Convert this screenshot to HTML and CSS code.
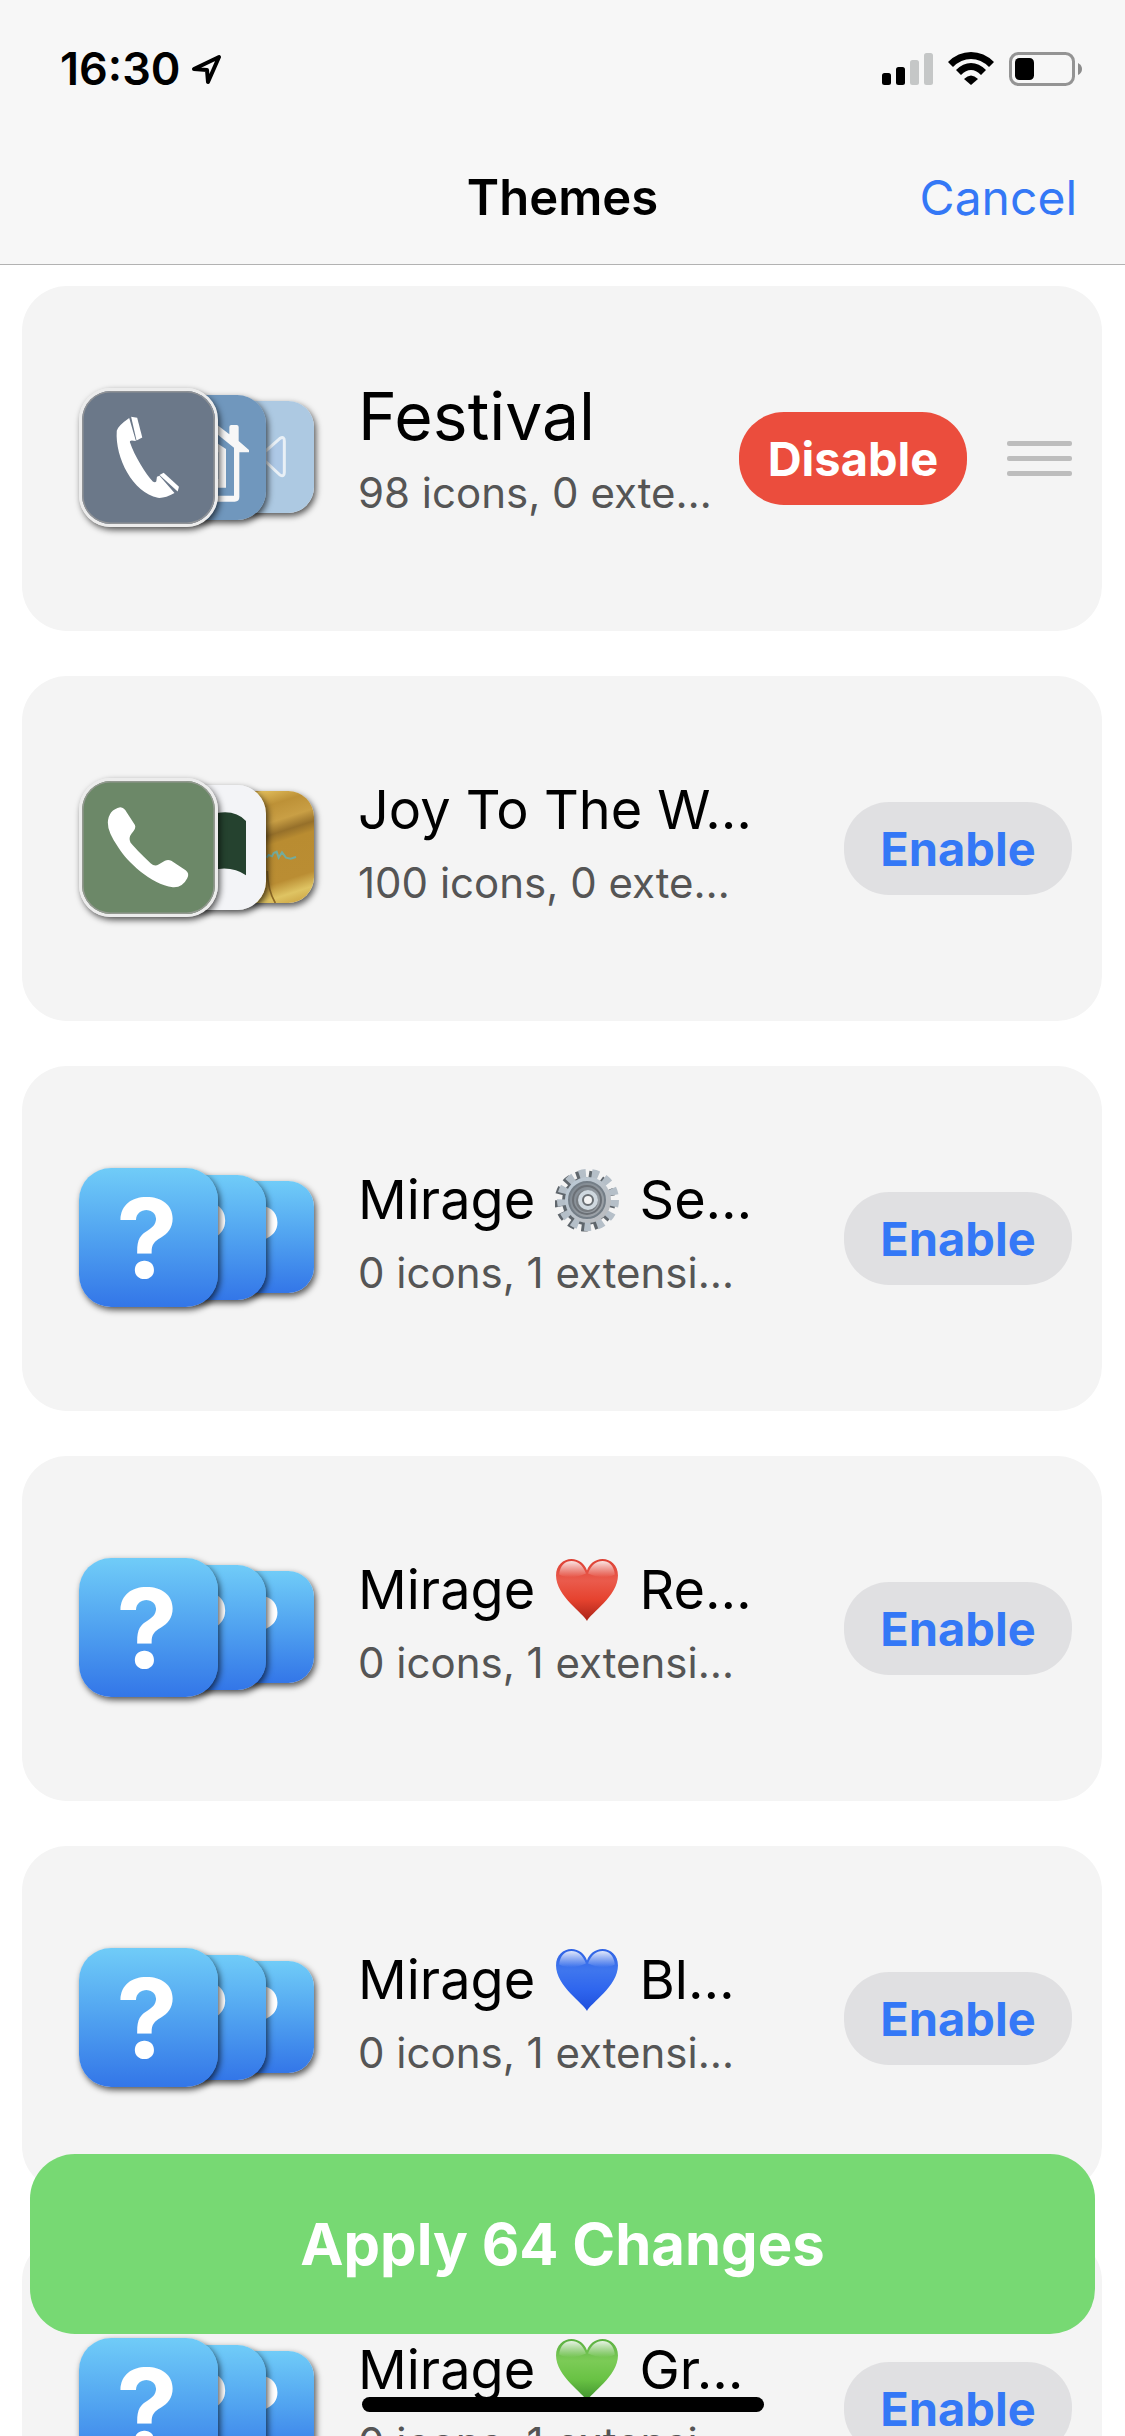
FILE: index.html
```html
<!DOCTYPE html>
<html lang="en">
<head>
<meta charset="utf-8">
<meta name="viewport" content="width=device-width, initial-scale=1">
<title>Themes</title>
<link rel="stylesheet" href="styles.css">
</head>
<body>
<svg class="defs" aria-hidden="true">
  <defs>
    <linearGradient id="sky" x1="0" y1="0" x2="0" y2="1">
      <stop offset="0" stop-color="#70ccf8"/>
      <stop offset="0.5" stop-color="#50a2f0"/>
      <stop offset="1" stop-color="#3376e8"/>
    </linearGradient>
    <linearGradient id="gold" x1="0" y1="0" x2="0" y2="1">
      <stop offset="0" stop-color="#e3bf5c"/>
      <stop offset="0.14" stop-color="#bd9137"/>
      <stop offset="0.28" stop-color="#c99f45"/>
      <stop offset="0.38" stop-color="#96702a"/>
      <stop offset="0.46" stop-color="#b98c31"/>
      <stop offset="0.78" stop-color="#ba8d33"/>
      <stop offset="0.9" stop-color="#dfc463"/>
      <stop offset="1" stop-color="#cda646"/>
    </linearGradient>
    <linearGradient id="steel" x1="0" y1="0" x2="1" y2="1">
      <stop offset="0" stop-color="#bccbd8"/>
      <stop offset="1" stop-color="#b9babc"/>
    </linearGradient>
    <linearGradient id="dish" x1="0" y1="0" x2="1" y2="1">
      <stop offset="0" stop-color="#7b848d"/>
      <stop offset="1" stop-color="#a3a8ad"/>
    </linearGradient>
    <linearGradient id="red" x1="0" y1="0" x2="0" y2="1">
      <stop offset="0" stop-color="#dc4034"/>
      <stop offset="0.35" stop-color="#ea5b4c"/>
      <stop offset="0.65" stop-color="#e6432f"/>
      <stop offset="1" stop-color="#a92318"/>
    </linearGradient>
    <linearGradient id="blue" x1="0" y1="0" x2="0" y2="1">
      <stop offset="0" stop-color="#2f62e4"/>
      <stop offset="0.35" stop-color="#3f76ee"/>
      <stop offset="0.65" stop-color="#2f66ee"/>
      <stop offset="1" stop-color="#1f4fdc"/>
    </linearGradient>
    <linearGradient id="green" x1="0" y1="0" x2="0" y2="1">
      <stop offset="0" stop-color="#59ae3f"/>
      <stop offset="0.35" stop-color="#7ccb57"/>
      <stop offset="0.65" stop-color="#69c244"/>
      <stop offset="1" stop-color="#3d8f2c"/>
    </linearGradient>
    <linearGradient id="gloss" x1="0" y1="0" x2="0" y2="1">
      <stop offset="0" stop-color="#fff" stop-opacity="0.85"/>
      <stop offset="1" stop-color="#fff" stop-opacity="0"/>
    </linearGradient>
    <symbol id="unknown" viewBox="0 0 139 139">
      <rect width="139" height="139" fill="url(#sky)"/>
      <text class="mark" x="68" y="110" text-anchor="middle">?</text>
    </symbol>
    <symbol id="heart" viewBox="0 0 62 62">
      <path d="M31 61 C28 54 1 37 1 17 C1 7 8 1 16 1 C23 1 29 6 31 12 C33 6 39 1 46 1 C54 1 61 7 61 17 C61 37 34 54 31 61Z"/>
      <path d="M4 16 C5 7 10 3 16 3 C22 3 27 7 30 15 C21 19 12 20 4 16Z M32 15 C35 7 40 3 46 3 C52 3 57 7 58 16 C50 20 41 19 32 15Z" fill="url(#gloss)"/>
    </symbol>
  </defs>
</svg>

<div class="app">
  <header class="header">
    <div class="status">
      <div class="status-left">
        <span class="time">16:30</span>
        <svg class="location" width="30" height="31" viewBox="0 0 30 31" aria-hidden="true"><path d="M2 15 L27 3 L16 28 L15 16Z" fill="none" stroke="#000" stroke-width="4" stroke-linejoin="round"/></svg>
      </div>
      <div class="status-right">
        <svg width="51" height="34" viewBox="0 0 51 34" aria-hidden="true">
          <rect x="0" y="21" width="9" height="12" rx="2.500"/>
          <rect x="14" y="15" width="9" height="18" rx="2.500"/>
          <rect x="28" y="8" width="9" height="25" rx="2.500" fill="#c5c7c7"/>
          <rect x="42" y="1" width="9" height="32" rx="2.500" fill="#c5c7c7"/>
        </svg>
        <svg width="46" height="34" viewBox="0 0 46 34" aria-hidden="true">
          <path d="M0 10 Q10 0 23 0 Q36 0 46 10 L41 15 Q33 7 23 7 Q13 7 5 15Z"/>
          <path d="M8 18 Q15 11 23 11 Q31 11 38 18 L33 23 Q28 18 23 18 Q18 18 13 23Z"/>
          <path d="M16 27 Q23 20 30 27 L23 33Z"/>
        </svg>
        <svg width="74" height="34" viewBox="0 0 74 34" aria-hidden="true">
          <rect x="1.500" y="1.500" width="63" height="31" rx="8" fill="none" stroke="#949494" stroke-width="3"/>
          <rect x="6" y="6" width="19" height="22" rx="4.500"/>
          <path d="M69 11 Q73 13 73 17 Q73 21 69 23Z" fill="#8c8c8c"/>
        </svg>
      </div>
    </div>
    <nav class="navbar">
      <h1 class="title">Themes</h1>
      <button class="cancel" type="button">Cancel</button>
    </nav>
  </header>

  <main class="list">
    <article class="card">
      <div class="stack">
        <svg class="icon front framed" viewBox="0 0 417 417" aria-hidden="true">
          <rect width="417" height="417" fill="#6b7889"/>
          <rect x="1" y="1" width="415" height="415" rx="88" fill="none" stroke="#8f9296" stroke-width="8"/>
          <g fill="#fff">
            <path d="M148 85 L169 157 Q148 152 150 160 C165 205 200 260 222 284 Q230 288 233 283 L235 269 L243 266 L290 320 Q260 337 238 335 C160 320 103 210 109 125 Q112 110 148 85Z"/>
            <path d="M154 81 L173 84 L189 146 L171 155Z"/>
            <path d="M243 263 L256 256 L304 300 L300 315Z"/>
          </g>
        </svg>
        <svg class="icon middle" viewBox="0 0 375 375" aria-hidden="true">
          <rect width="375" height="375" fill="#7097bd"/>
          <path d="M187 58 L265 118 V96 Q265 90 271 90 H287 Q293 90 293 96 V138 L324 165 V172 H295 V306 Q295 320 281 320 H187Z" fill="#f7f7f7"/>
          <path d="M187 84 L279 158 V302 H187Z" fill="#7097bd"/>
          <path d="M187 118 L255 162 V278 H187Z" fill="#f7f7f7"/>
          <path d="M187 150 L232 172 V252 H187Z" fill="#7097bd"/>
        </svg>
        <svg class="icon back" viewBox="0 0 336 336" aria-hidden="true">
          <rect width="336" height="336" fill="#adc9e2"/>
          <path d="M189 152 L234 112 Q247 105 247 120 V214 Q247 229 234 222 L189 180Z" fill="#adc8e6" stroke="#e9f0f6" stroke-width="9" stroke-linejoin="round"/>
        </svg>
      </div>
      <div class="info">
        <h2 class="name name-active">Festival</h2>
        <p class="detail">98 icons, 0 exte…</p>
      </div>
      <button class="toggle toggle-on" type="button">Disable</button>
      <button class="handle" type="button" aria-label="Reorder"><span></span><span></span><span></span></button>
    </article>

    <article class="card">
      <div class="stack">
        <svg class="icon front framed" viewBox="0 0 417 417" aria-hidden="true">
          <rect width="417" height="417" fill="#6c8868"/>
          <rect x="1" y="1" width="415" height="415" rx="88" fill="none" stroke="#92988f" stroke-width="8"/>
          <path fill="#fff" d="M120 82 Q133 83 140 98 L166 138 Q171 148 155 165 Q145 178 152 193 C170 215 200 243 215 258 Q228 270 240 262 L260 250 Q270 245 280 250 L325 280 Q338 290 330 305 Q315 335 285 333 C215 325 140 250 115 210 Q80 160 81 130 Q83 90 120 82Z"/>
        </svg>
        <svg class="icon middle" viewBox="0 0 375 375" aria-hidden="true">
          <rect width="375" height="375" fill="#f3f4f7"/>
          <path d="M200 92 Q275 66 315 108 V271 Q270 238 200 258Z" fill="#25422f"/>
        </svg>
        <svg class="icon back" viewBox="0 0 336 336" aria-hidden="true">
          <g transform="rotate(-18 168 168)"><rect x="-60" y="10" width="456" height="356" fill="url(#gold)"/><rect x="-60" y="-90" width="456" height="101" fill="#c1963c"/></g>
          <path d="M194 200 L200 192 L210 196 L215 186 L224 182 L230 200 L240 184 L252 200 L266 203 L282 198" fill="none" stroke="#74ab9c" stroke-width="6"/>
          <path d="M196 240 Q198 300 220 336" fill="none" stroke="#8a6725" stroke-width="5"/>
        </svg>
      </div>
      <div class="info">
        <h2 class="name">Joy To The W…</h2>
        <p class="detail">100 icons, 0 exte…</p>
      </div>
      <button class="toggle" type="button">Enable</button>
    </article>

    <article class="card">
      <div class="stack">
        <svg class="icon front" aria-hidden="true"><use href="#unknown"/></svg>
        <svg class="icon middle" aria-hidden="true"><use href="#unknown"/></svg>
        <svg class="icon back" aria-hidden="true"><use href="#unknown"/></svg>
      </div>
      <div class="info">
        <h2 class="name">Mirage <svg class="emoji" viewBox="0 0 64 64" role="img" aria-label="gear">
          <circle cx="30" cy="33" r="26" fill="none" stroke="#5f666c" stroke-width="9" stroke-dasharray="6.500 6.066"/>
          <circle cx="31" cy="33" r="24" fill="#5f666c"/>
          <circle cx="33" cy="32" r="26" fill="none" stroke="#b5bfc8" stroke-width="10" stroke-dasharray="6.500 6.066"/>
          <circle cx="33" cy="32" r="23" fill="url(#steel)"/>
          <circle cx="32" cy="32" r="18" fill="url(#dish)" stroke="#747e87" stroke-width="2"/>
          <circle cx="32" cy="32" r="14" fill="none" stroke="#6b7076" stroke-width="2"/>
          <circle cx="32" cy="33" r="11" fill="#777c81"/>
          <circle cx="33" cy="32" r="10" fill="#cfd8df"/>
          <circle cx="33" cy="32" r="5" fill="#f4f4f4" stroke="#6a6f74" stroke-width="2"/>
        </svg> Se…</h2>
        <p class="detail">0 icons, 1 extensi…</p>
      </div>
      <button class="toggle" type="button">Enable</button>
    </article>

    <article class="card">
      <div class="stack">
        <svg class="icon front" aria-hidden="true"><use href="#unknown"/></svg>
        <svg class="icon middle" aria-hidden="true"><use href="#unknown"/></svg>
        <svg class="icon back" aria-hidden="true"><use href="#unknown"/></svg>
      </div>
      <div class="info">
        <h2 class="name">Mirage <svg class="emoji heart-red" role="img" aria-label="red heart"><use href="#heart"/></svg> Re…</h2>
        <p class="detail">0 icons, 1 extensi…</p>
      </div>
      <button class="toggle" type="button">Enable</button>
    </article>

    <article class="card">
      <div class="stack">
        <svg class="icon front" aria-hidden="true"><use href="#unknown"/></svg>
        <svg class="icon middle" aria-hidden="true"><use href="#unknown"/></svg>
        <svg class="icon back" aria-hidden="true"><use href="#unknown"/></svg>
      </div>
      <div class="info">
        <h2 class="name">Mirage <svg class="emoji heart-blue" role="img" aria-label="blue heart"><use href="#heart"/></svg> Bl…</h2>
        <p class="detail">0 icons, 1 extensi…</p>
      </div>
      <button class="toggle" type="button">Enable</button>
    </article>

    <article class="card">
      <div class="stack">
        <svg class="icon front" aria-hidden="true"><use href="#unknown"/></svg>
        <svg class="icon middle" aria-hidden="true"><use href="#unknown"/></svg>
        <svg class="icon back" aria-hidden="true"><use href="#unknown"/></svg>
      </div>
      <div class="info">
        <h2 class="name">Mirage <svg class="emoji heart-green" role="img" aria-label="green heart"><use href="#heart"/></svg> Gr…</h2>
        <p class="detail">0 icons, 1 extensi…</p>
      </div>
      <button class="toggle" type="button">Enable</button>
    </article>
  </main>

  <footer class="dock">
    <button class="apply" type="button">Apply 64 Changes</button>
    <div class="home-indicator"></div>
  </footer>
</div>
</body>
</html>
```
FILE: styles.css
```css
* {
  box-sizing: border-box;
}

body {
  margin: 0;
  background: #fff;
  color: #000;
  font-family: Inter, "Liberation Sans", sans-serif;
}

button {
  border: 0;
  padding: 0;
  background: none;
  font-family: inherit;
  cursor: pointer;
}

h1,
h2,
p {
  margin: 0;
}

.defs {
  position: absolute;
  width: 0;
  height: 0;
}

.app {
  position: relative;
  display: flex;
  flex-direction: column;
  height: 100vh;
  overflow: hidden;
}

/* Status bar and navigation bar */

.header {
  flex: none;
  background: #f7f7f7;
  border-bottom: 1px solid #b2b2b2;
}

.status {
  display: flex;
  justify-content: space-between;
  align-items: center;
  height: 132px;
  padding: 6px 42px 0 60px;
}

.status-left {
  display: flex;
  align-items: center;
  gap: 12px;
}

.status-right {
  display: flex;
  align-items: center;
  gap: 15px;
}

.time {
  font-size: 45px;
  line-height: 52px;
  font-weight: 600;
}

.navbar {
  display: grid;
  grid-template-columns: 1fr auto 1fr;
  align-items: center;
  height: 132px;
  padding: 0 48px;
}

.title {
  grid-column: 2;
  font-size: 49px;
  line-height: 60px;
  font-weight: 600;
}

.cancel {
  justify-self: end;
  color: #3478f6;
  font-size: 48px;
  line-height: 60px;
}

/* Theme cards */

.list {
  flex: 1;
  min-height: 0;
  overflow-y: auto;
  scrollbar-width: none;
  display: flex;
  flex-direction: column;
  gap: 45px;
  padding: 21px 23px 0 22px;
}

.card {
  flex: none;
  display: flex;
  align-items: center;
  min-height: 345px;
  padding: 0 30px 0 57px;
  border-radius: 45px;
  background: #f4f4f4;
}

.stack {
  flex: none;
  display: flex;
  align-items: center;
  padding-bottom: 3px;
  margin-right: 44px;
}

.icon {
  position: relative;
  flex: none;
  border-radius: 23%;
  box-shadow: 2px 3px 6px rgba(0, 0, 0, 0.65);
}

.front {
  z-index: 3;
  width: 139px;
  height: 139px;
}

.middle {
  z-index: 2;
  width: 125px;
  height: 125px;
  margin-left: -77px;
}

.back {
  z-index: 1;
  width: 112px;
  height: 112px;
  margin-left: -64px;
}

.framed {
  border: 3px solid #ececec;
}

.mark {
  fill: #fff;
  font-size: 110px;
  font-weight: 700;
}

.info {
  flex: 1;
  min-width: 0;
  padding-bottom: 3px;
  white-space: nowrap;
}

.name {
  font-size: 54px;
  line-height: 72px;
  font-weight: 400;
}

.name-active {
  padding-bottom: 8px;
  font-size: 66px;
  line-height: 64px;
}

.detail {
  color: #555;
  font-size: 42px;
  line-height: 74px;
}

.emoji {
  width: 64px;
  height: 64px;
  margin: 0 5px;
  vertical-align: -13px;
}

.heart-red {
  fill: url(#red);
}

.heart-blue {
  fill: url(#blue);
}

.heart-green {
  fill: url(#green);
}

.toggle {
  flex: none;
  width: 228px;
  height: 93px;
  border-radius: 45px;
  background: #e0e0e2;
  color: #3478f6;
  font-size: 47px;
  line-height: 60px;
  font-weight: 700;
}

.toggle-on {
  background: #eb4d3d;
  color: #fff;
}

.handle {
  flex: none;
  display: flex;
  flex-direction: column;
  gap: 10px;
  width: 65px;
  margin-left: 40px;
}

.handle span {
  height: 5px;
  border-radius: 2px;
  background: #bdbdbd;
}

/* Floating action over the list */

.dock {
  position: absolute;
  z-index: 10;
  left: 0;
  right: 0;
  bottom: 0;
  display: flex;
  flex-direction: column;
  align-items: center;
  gap: 63px;
  padding: 0 30px 24px;
}

.apply {
  align-self: stretch;
  height: 180px;
  border-radius: 45px;
  background: #77d973;
  color: #fff;
  font-size: 58px;
  line-height: 72px;
  font-weight: 700;
}

.home-indicator {
  width: 402px;
  height: 15px;
  border-radius: 8px;
  background: #000;
}
```
